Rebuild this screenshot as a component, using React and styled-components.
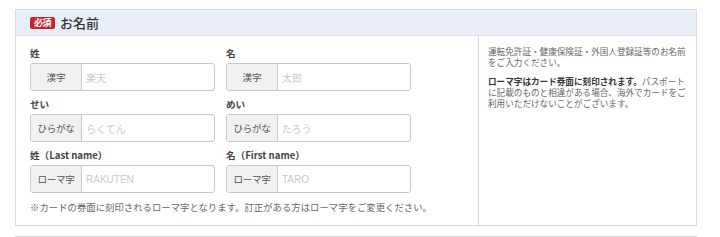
import React from "react";
import styled, { createGlobalStyle } from "styled-components";

const GlobalStyle = createGlobalStyle`
  html, body {
    margin: 0;
    padding: 0;
    background: #fff;
  }
  body {
    font-family: "Noto Sans CJK JP", "Noto Sans", "Liberation Sans", sans-serif;
    color: #333;
  }
`;

const Page = styled.div`
  padding: 9px 23px 0 15px;
  display: flex;
  flex-direction: column;
  gap: 10px;
`;

const Section = styled.section`
  border: 1px solid #dcdcdc;
  border-top-color: #d3d9e4;
  background: #fff;
  box-shadow: 0 1px 1px rgba(0, 0, 0, 0.04);
`;

const Header = styled.div`
  height: 26px;
  background: #e9eef9;
  border-bottom: 1px solid #e0e4ea;
  display: flex;
  align-items: center;
  gap: 5px;
  padding-left: 14px;
  box-sizing: border-box;
`;

const Badge = styled.span`
  width: 25px;
  height: 12px;
  border-radius: 2px;
  background: #c9252f;
  color: #fff;
  font-size: 9px;
  font-weight: 700;
  line-height: 12px;
  text-align: center;
  letter-spacing: -0.5px;
`;

const Title = styled.h2`
  margin: 0;
  font-size: 13px;
  font-weight: 500;
  color: #333;
  line-height: 1;
`;

const Body = styled.div`
  display: flex;
`;

const Main = styled.div`
  width: 463px;
  box-sizing: border-box;
  padding: 11px 0 12px 14px;
  border-right: 1px solid #d6d6d6;
`;

const Fields = styled.div`
  display: grid;
  grid-template-columns: 185px 185px;
  column-gap: 11px;
  row-gap: 7px;
`;

const Field = styled.div`
  display: flex;
  flex-direction: column;
  gap: 4px;
`;

const Label = styled.label`
  font-size: 9.6px;
  font-weight: 700;
  line-height: 12px;
  color: #444;
`;

const InputBox = styled.div`
  display: flex;
  height: 28px;
  box-sizing: border-box;
  border: 1px solid #c9c9c9;
  border-radius: 3px;
  overflow: hidden;
  background: #fff;
`;

const Prefix = styled.span`
  width: 50px;
  flex: none;
  background: #f1f1f1;
  border-right: 1px solid #c9c9c9;
  display: flex;
  align-items: center;
  justify-content: center;
  font-size: 9.6px;
  letter-spacing: ${(p) => (p.$long ? "-0.4px" : "0")};
  color: #555;
  white-space: nowrap;
`;

const Input = styled.input`
  flex: 1;
  min-width: 0;
  border: none;
  outline: none;
  padding: 0 4px;
  font-family: ${(p) =>
    p.$latin
      ? `"Liberation Sans", Arial, sans-serif`
      : `"Noto Sans CJK JP", sans-serif`};
  font-size: 10px;
  color: #333;
  background: transparent;
  &::placeholder {
    color: #c8c8c8;
  }
`;

const Note = styled.p`
  margin: 8px 0 0;
  font-size: 9.4px;
  line-height: 12px;
  color: #666;
  white-space: nowrap;
`;

const Side = styled.aside`
  flex: 1;
  padding: 10px 7px 0 9px;
  font-size: 8.6px;
  line-height: 11px;
  color: #666;
`;

const SideText = styled.p`
  margin: 0 0 8px;
`;

const Strong = styled.strong`
  font-weight: 700;
  color: #333;
`;

const NextSection = styled(Section)`
  height: 1px;
  border-bottom: none;
  border-top-color: #d6d6d6;
  box-shadow: none;
`;

const fields = [
  { label: "姓", prefix: "漢字", placeholder: "楽天" },
  { label: "名", prefix: "漢字", placeholder: "太郎" },
  { label: "せい", prefix: "ひらがな", placeholder: "らくてん", long: true },
  { label: "めい", prefix: "ひらがな", placeholder: "たろう", long: true },
  { label: "姓（Last name）", prefix: "ローマ字", placeholder: "RAKUTEN", long: true, latin: true },
  { label: "名（First name）", prefix: "ローマ字", placeholder: "TARO", long: true, latin: true },
];

export default function App() {
  return (
    <>
      <GlobalStyle />
      <Page>
        <Section>
          <Header>
            <Badge>必須</Badge>
            <Title>お名前</Title>
          </Header>
          <Body>
            <Main>
              <Fields>
                {fields.map((f, i) => (
                  <Field key={i}>
                    <Label>{f.label}</Label>
                    <InputBox>
                      <Prefix $long={f.long}>{f.prefix}</Prefix>
                      <Input $latin={f.latin} placeholder={f.placeholder} />
                    </InputBox>
                  </Field>
                ))}
              </Fields>
              <Note>
                ※カードの券面に刻印されるローマ字となります。訂正がある方はローマ字をご変更ください。
              </Note>
            </Main>
            <Side>
              <SideText>
                運転免許証・健康保険証・外国人登録証等のお名前をご入力ください。
              </SideText>
              <SideText>
                <Strong>ローマ字はカード券面に刻印されます。</Strong>
                パスポートに記載のものと相違がある場合、海外でカードをご利用いただけないことがございます。
              </SideText>
            </Side>
          </Body>
        </Section>
        <NextSection />
      </Page>
    </>
  );
}
